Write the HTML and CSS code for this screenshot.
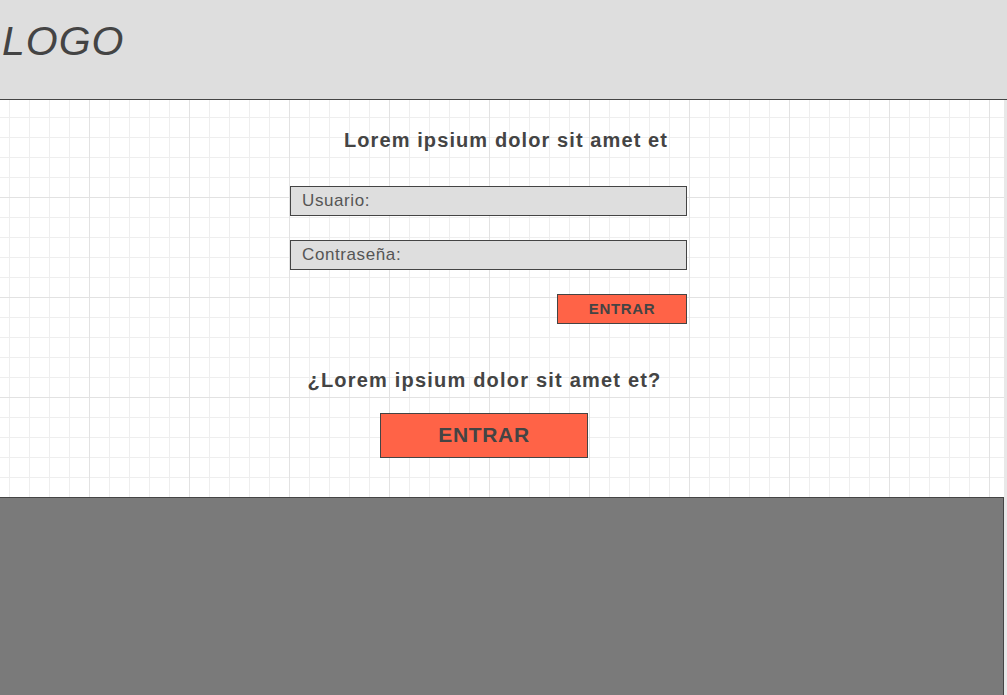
FILE: index.html
```html
<!DOCTYPE html>
<html lang="es">
<head>
<meta charset="utf-8">
<title>Login</title>
<link rel="stylesheet" href="styles.css">
</head>
<body>
<header class="header">
  <div class="logo">LOGO</div>
</header>
<main class="main">
  <div class="form">
    <h1 class="title">Lorem ipsium dolor sit amet et</h1>
    <div class="field">Usuario:</div>
    <div class="field">Contraseña:</div>
    <div class="actions">
      <button class="btn btn-small">ENTRAR</button>
    </div>
    <h2 class="question">¿Lorem ipsium dolor sit amet et?</h2>
    <button class="btn btn-large">ENTRAR</button>
  </div>
</main>
<footer class="footer"></footer>
</body>
</html>
```
FILE: styles.css
```css
html, body {
  margin: 0;
  padding: 0;
  height: 100%;
}
body {
  background: #e8e8e8;
  font-family: "Liberation Sans", Arial, sans-serif;
  color: #444;
  overflow: hidden;
  display: flex;
  flex-direction: column;
}
.header {
  height: 99px;
  background: #dedede;
  border-bottom: 1px solid #444;
  flex: none;
}
.logo {
  font-style: italic;
  font-size: 41px;
  line-height: 41px;
  letter-spacing: 1px;
  padding-top: 21px;
  padding-left: 2px;
  color: #444;
}
.main {
  width: 1004px;
  height: 397px;
  flex: none;
  box-sizing: border-box;
  padding-top: 28px;
  background-color: #fff;
  background-image:
    linear-gradient(to right, #e2e2e2 1px, transparent 1px),
    linear-gradient(to bottom, #e2e2e2 1px, transparent 1px),
    linear-gradient(to right, #eeeeee 1px, transparent 1px),
    linear-gradient(to bottom, #eeeeee 1px, transparent 1px);
  background-size: 100px 100px, 100px 100px, 20px 20px, 20px 20px;
  background-position: 89px 0, 0 97px, 9px 0, 0 17px;
}
.form {
  margin-left: 290px;
  width: 397px;
  display: flex;
  flex-direction: column;
}
.title {
  margin: 0 0 34px 0;
  width: 432px;
  text-align: center;
  font-size: 20px;
  line-height: 24px;
  letter-spacing: 1.1px;
  font-weight: bold;
  color: #444;
}
.field {
  height: 30px;
  box-sizing: border-box;
  border: 1px solid #444;
  background: #dedede;
  padding-left: 11px;
  font-size: 17px;
  line-height: 28px;
  letter-spacing: 0.6px;
  color: #555;
  margin-bottom: 24px;
}
.actions {
  display: flex;
  justify-content: flex-end;
}
.btn {
  box-sizing: border-box;
  border: 1px solid #444;
  background: #ff6347;
  color: #444;
  font-family: "Liberation Sans", Arial, sans-serif;
  font-weight: bold;
  padding: 0 0 2px 0;
  margin: 0;
  letter-spacing: 0.65px;
}
.btn-small {
  width: 130px;
  height: 30px;
  font-size: 15px;
}
.question {
  margin: 44px 0 21px 0;
  width: 389px;
  text-align: center;
  font-size: 20px;
  line-height: 24px;
  letter-spacing: 1.2px;
  font-weight: bold;
  color: #444;
}
.btn-large {
  margin-left: 90px;
  width: 208px;
  height: 45px;
  font-size: 21px;
}
.footer {
  width: 1004px;
  flex: 1;
  box-sizing: border-box;
  background: #7a7a7a;
  border-top: 1px solid #444;
  border-right: 1px solid #444;
}
```
